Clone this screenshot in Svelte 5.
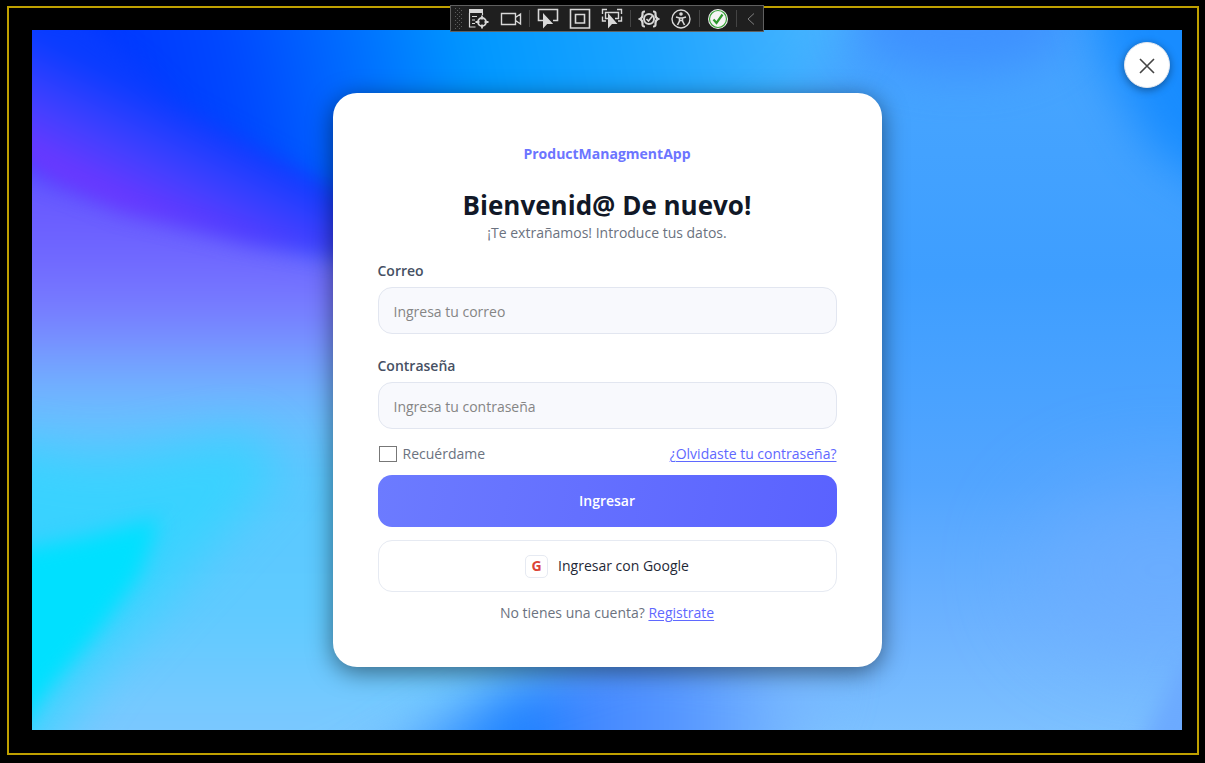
<script>
  let email = $state('');
  let password = $state('');
  let remember = $state(false);
</script>

<div class="page">
  <div class="frame">
    <main class="stage">
      <svg class="backdrop" viewBox="0 0 1150 700" preserveAspectRatio="none" color-interpolation-filters="sRGB" aria-hidden="true">
        <defs>
          <linearGradient id="sky" x1="0" y1="0" x2="0" y2="1">
            <stop offset="0" stop-color="#48a6ff" />
            <stop offset="0.35" stop-color="#3e9eff" />
            <stop offset="0.65" stop-color="#52a5ff" />
            <stop offset="0.85" stop-color="#6cb2ff" />
            <stop offset="1" stop-color="#7cc0ff" />
          </linearGradient>
          <linearGradient id="royal" gradientUnits="userSpaceOnUse" x1="100" y1="90" x2="780" y2="-60">
            <stop offset="0" stop-color="#0038ff" />
            <stop offset="0.16" stop-color="#0048ff" />
            <stop offset="0.34" stop-color="#0070ff" />
            <stop offset="0.5" stop-color="#0098ff" />
            <stop offset="0.74" stop-color="#1ca4ff" />
            <stop offset="1" stop-color="#48b4ff" />
          </linearGradient>
          <linearGradient id="violet" gradientUnits="userSpaceOnUse" x1="150" y1="76" x2="100" y2="176">
            <stop offset="0" stop-color="#083cff" />
            <stop offset="0.55" stop-color="#4040ff" />
            <stop offset="1" stop-color="#6c38ff" />
          </linearGradient>
          <linearGradient id="lilac" gradientUnits="userSpaceOnUse" x1="0" y1="150" x2="0" y2="700">
            <stop offset="0" stop-color="#6858ff" />
            <stop offset="0.1" stop-color="#6c60ff" />
            <stop offset="0.24" stop-color="#787cff" />
            <stop offset="0.34" stop-color="#74a4ff" />
            <stop offset="0.42" stop-color="#6cbeff" />
            <stop offset="0.55" stop-color="#58c8ff" />
            <stop offset="0.8" stop-color="#60caff" />
            <stop offset="1" stop-color="#7cc8ff" />
          </linearGradient>
          <linearGradient id="pool" gradientUnits="userSpaceOnUse" x1="340" y1="0" x2="760" y2="0">
            <stop offset="0" stop-color="#58b0ff" />
            <stop offset="0.36" stop-color="#1c80ff" />
            <stop offset="0.52" stop-color="#4488ff" />
            <stop offset="0.75" stop-color="#5898ff" />
            <stop offset="1" stop-color="#78b8ff" />
          </linearGradient>
          <filter id="soft8" x="-50%" y="-50%" width="200%" height="200%"><feGaussianBlur stdDeviation="10" /></filter>
          <filter id="soft24" x="-50%" y="-50%" width="200%" height="200%"><feGaussianBlur stdDeviation="24" /></filter>
          <filter id="soft50" x="-80%" y="-80%" width="260%" height="260%"><feGaussianBlur stdDeviation="45" /></filter>
        </defs>
        <rect width="1150" height="700" fill="url(#sky)" />
        <polygon points="-80,-80 860,-80 780,60 640,160 500,300 -80,300" fill="url(#royal)" filter="url(#soft24)" />
        <polygon points="-80,100 300,210 600,260 580,620 280,760 -80,760" fill="url(#lilac)" filter="url(#soft24)" />
        <polygon points="-60,-60 0,-20 50,-10 110,36 150,76 220,114 310,162 450,230 450,250 310,226 220,213 160,198 90,181 20,152 -60,100" fill="url(#violet)" filter="url(#soft8)" />
        <polygon points="-120,400 70,430 220,400 250,440 160,540 70,640 -10,760 -120,760" fill="#28d8ff" opacity="0.65" filter="url(#soft24)" />
        <polygon points="-40,525 50,508 128,488 108,545 64,604 16,660 -40,740" fill="#00e0ff" filter="url(#soft8)" />
        <polygon points="290,780 390,705 470,660 600,620 800,640 740,780" fill="url(#pool)" filter="url(#soft24)" />
        <ellipse cx="930" cy="-6" rx="110" ry="50" fill="#3c8cff" opacity="0.8" filter="url(#soft24)" />
        <polygon points="1050,-60 1250,-60 1250,200 1120,120 1070,30" fill="#1088ff" opacity="0.85" filter="url(#soft24)" />
        <ellipse cx="1130" cy="540" rx="130" ry="90" fill="#70adff" opacity="0.6" filter="url(#soft50)" />
        <polygon points="1095,740 1150,630 1200,620 1200,740" fill="#6caaff" filter="url(#soft8)" />
      </svg>

      <div class="toolbar" role="toolbar" aria-label="Herramientas">
        <svg class="grip" viewBox="0 0 8 22" aria-hidden="true">
          <defs>
            <pattern id="dots" width="4" height="4" patternUnits="userSpaceOnUse">
              <rect width="1" height="1" fill="#5c5c5c" />
              <rect x="2" y="2" width="1" height="1" fill="#5c5c5c" />
            </pattern>
          </defs>
          <rect width="7" height="21" fill="url(#dots)" />
        </svg>
        <button type="button" class="tool" aria-label="Árbol visual">
          <svg viewBox="0 0 22 22"><path d="M1 1h14v4H1z" fill="#d8d8d8" stroke="none" /><path d="M1.500 5v14h6M14.500 5v2M4 8.500h5M4 12h3M4 15.500h3" stroke-width="1.200" /><circle cx="14" cy="14" r="4" stroke-width="1.800" /><path d="M14 7.500v4M14 16.500v4M7.500 14h4M16.500 14h4" stroke-width="1.800" /></svg>
        </button>
        <button type="button" class="tool" aria-label="Grabar">
          <svg viewBox="0 0 22 22"><path d="M1.500 5.500h14v11h-14zM15.500 9.500l5-3.500v10l-5-3.500" stroke-width="1.400" /></svg>
        </button>
        <span class="rule"></span>
        <button type="button" class="tool" aria-label="Seleccionar elemento">
          <svg viewBox="0 0 22 22"><path d="M6 12.500H1.500v-11h19v11H16" stroke-width="1.600" /><path d="M6 5v15.500l4.200-4.600h6z" fill="#d8d8d8" stroke="none" /></svg>
        </button>
        <button type="button" class="tool" aria-label="Mostrar diseño">
          <svg viewBox="0 0 22 22"><path d="M1.500 1.500h19v18.500h-19zM6.500 6.500h9v8.500h-9z" stroke-width="1.600" /></svg>
        </button>
        <button type="button" class="tool" aria-label="Seguir foco">
          <svg viewBox="0 0 22 22"><path d="M6 1.500H1.500V6M16 1.500h4.500V6M1.500 8.500V13H5M20.500 8.500V13H17M7 10.500H4.500v-6h13v6H14" stroke-width="1.400" /><path d="M7 5v15.500l4-4.400h5.500z" fill="#d8d8d8" stroke="none" /></svg>
        </button>
        <span class="rule"></span>
        <button type="button" class="tool" aria-label="Errores de enlace">
          <svg viewBox="0 0 22 22"><path d="M7 3.500C4 3.500 4.500 5 4.500 7S4 10 2 11c2 1 2.500 2 2.500 4S4 18.500 7 18.500M15 3.500c3 0 2.500 1.500 2.500 3.500s.5 3 2.500 4c-2 1-2.500 2-2.500 4s.5 3.500-2.500 3.500" stroke-width="2.200" /><circle cx="11" cy="11" r="5" stroke-width="2" /><path d="M8.500 11l2 2 4-5" stroke-width="1.600" /></svg>
        </button>
        <button type="button" class="tool" aria-label="Accesibilidad">
          <svg viewBox="0 0 22 22"><circle cx="11" cy="11" r="9" stroke-width="1.400" /><circle cx="11" cy="6" r="1.800" fill="#d8d8d8" stroke="none" /><path d="M6 9l3.500 1h3L16 9M9.500 10v3L7.500 17M12.500 10v3l2 4M9.500 12.500h3" stroke-width="1.600" /></svg>
        </button>
        <span class="rule"></span>
        <button type="button" class="tool" aria-label="Recarga activa">
          <svg viewBox="0 0 22 22"><circle cx="11" cy="11" r="10" fill="#f4f4f4" stroke="none" /><circle cx="11" cy="11" r="8.500" stroke="#38a038" stroke-width="1.200" /><path d="M6.500 11.500l3 3.500 6-8.500" stroke="#2c982c" stroke-width="2.200" /></svg>
        </button>
        <span class="rule"></span>
        <button type="button" class="tool slim" aria-label="Contraer">
          <svg viewBox="0 0 22 22"><path d="M14 5.500L8 11l6 5.500" stroke="#808080" /></svg>
        </button>
      </div>

      <button type="button" class="close" aria-label="Cerrar">
        <svg viewBox="0 0 16 16"><path d="M1 1l14 14M15 1L1 15" /></svg>
      </button>

      <form class="card" onsubmit={(e) => e.preventDefault()}>
        <p class="brand">ProductManagmentApp</p>
        <h1>Bienvenid@ De nuevo!</h1>
        <p class="sub">¡Te extrañamos! Introduce tus datos.</p>

        <div class="field">
          <label for="email">Correo</label>
          <input id="email" type="email" placeholder="Ingresa tu correo" bind:value={email} />
        </div>
        <div class="field">
          <label for="password">Contraseña</label>
          <input id="password" type="password" placeholder="Ingresa tu contraseña" bind:value={password} />
        </div>

        <div class="options">
          <label class="remember"><input type="checkbox" bind:checked={remember} />Recuérdame</label>
          <a href="#recuperar">¿Olvidaste tu contraseña?</a>
        </div>

        <button type="submit" class="action primary">Ingresar</button>
        <button type="button" class="action google"><span class="g">G</span>Ingresar con Google</button>
        <p class="signup">No tienes una cuenta? <a href="#registro">Registrate</a></p>
      </form>
    </main>
  </div>
</div>

<style>
  :global(body) {
    margin: 0;
    background: #000;
  }
  .page, .page * {
    box-sizing: border-box;
  }
  .page {
    display: flex;
    min-height: 100vh;
    padding: 6px 6px 8px 7px;
    background: #000;
    font: 14px/20px "Segoe UI", "Open Sans", "Noto Sans", sans-serif;
    color: #6b7280;
  }
  .frame {
    flex: 1;
    display: flex;
    padding: 22px 15px 23px 23px;
    border: 2px solid #bfa000;
  }
  .stage {
    position: relative;
    flex: 1;
    display: flex;
    align-items: center;
    justify-content: center;
    padding: 32px 16px;
  }
  .backdrop {
    position: absolute;
    inset: 0;
    width: 100%;
    height: 100%;
    overflow: hidden;
  }
  p, h1 {
    margin: 0;
  }
  button, input {
    font: inherit;
  }
  a {
    color: #5f68ff;
    text-decoration: underline;
    text-underline-offset: 2px;
  }

  .toolbar {
    position: absolute;
    top: -25px;
    left: 50%;
    transform: translateX(-50%);
    z-index: 2;
    display: flex;
    align-items: center;
    height: 27px;
    padding: 0 0 0 4px;
    border: 1px solid #606060;
    background: #1f1f1f;
  }
  .grip {
    width: 8px;
    height: 22px;
  }
  .tool {
    display: flex;
    align-items: center;
    justify-content: center;
    width: 32px;
    height: 25px;
    padding: 0;
    border: 0;
    background: none;
  }
  .slim {
    width: 24px;
  }
  .tool svg {
    width: 22px;
    height: 22px;
    fill: none;
    stroke: #d8d8d8;
  }
  .rule {
    width: 1px;
    height: 17px;
    margin: 0 2px;
    background: #444;
  }

  .close {
    position: absolute;
    top: 12px;
    right: 12px;
    z-index: 1;
    display: grid;
    place-items: center;
    width: 46px;
    height: 46px;
    padding: 2px 0 0;
    border: 1px solid #e4e8f0;
    border-radius: 50%;
    background: #fff;
    box-shadow: 0 2px 8px rgba(0, 0, 0, 0.4);
  }
  .close svg {
    width: 16px;
    height: 16px;
    fill: none;
    stroke: #444;
    stroke-width: 1.600;
  }

  .card {
    position: relative;
    display: flex;
    flex-direction: column;
    width: 100%;
    max-width: 549px;
    padding: 51px 45px 44px;
    border-radius: 24px;
    background: #fff;
    box-shadow: 0 5px 24px rgba(0, 0, 0, 0.5);
  }
  .brand {
    text-align: center;
    font-weight: 700;
    color: #6c75ff;
  }
  h1 {
    margin-top: 23px;
    text-align: center;
    font-size: 26px;
    line-height: 36px;
    font-weight: 700;
    color: #111827;
  }
  .sub, .signup {
    text-align: center;
  }
  .field {
    display: flex;
    flex-direction: column;
    gap: 6px;
    margin-top: 18px;
  }
  .field + .field {
    margin-top: 22px;
  }
  .field label {
    font-weight: 600;
    color: #465063;
  }
  .field input {
    width: 100%;
    height: 47px;
    padding: 2px 15px 0;
    border: 1px solid #e2e6f0;
    border-radius: 14px;
    background: #f8f9fd;
    color: #111827;
  }
  .field input::placeholder {
    color: #858585;
    opacity: 1;
  }
  .options {
    display: flex;
    align-items: center;
    justify-content: space-between;
    margin: 15px 0 11px;
  }
  .remember {
    display: flex;
    align-items: center;
    gap: 6px;
  }
  .remember input {
    appearance: none;
    width: 18px;
    height: 16px;
    margin: 0 0 0 1px;
    border: 1px solid #777;
    background: #fff;
  }
  .remember input:checked {
    background: #5f68ff;
  }
  .action {
    display: flex;
    align-items: center;
    justify-content: center;
    gap: 10px;
    height: 52px;
    padding: 0;
    border: 0;
    border-radius: 14px;
  }
  .primary {
    background: linear-gradient(100deg, #6c7bff, #5a62ff);
    color: #fff;
    font-weight: 600;
  }
  .google {
    margin: 13px 0 11px;
    border: 1px solid #e6eaf2;
    background: #fff;
    color: #1f2937;
  }
  .g {
    display: grid;
    place-items: center;
    width: 23px;
    height: 23px;
    border: 1px solid #e6eaf2;
    border-radius: 5px;
    font-weight: 700;
    color: #db4437;
  }
</style>
